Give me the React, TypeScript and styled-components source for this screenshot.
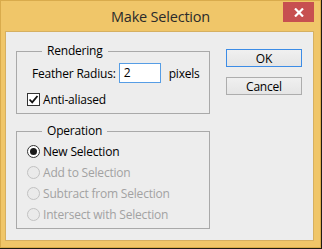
import React from 'react'
import styled, { createGlobalStyle } from 'styled-components'

const GlobalStyle = createGlobalStyle`
    html, body {
        margin: 0;
        padding: 0;
        background: #1e1b12;
    }
    body {
        width: 322px;
        height: 249px;
        overflow: hidden;
        font-family: "Open Sans", "Noto Sans", sans-serif;
        letter-spacing: -0.2px;
    }
`

const Window = styled.div`
    box-sizing: border-box;
    width: 321px;
    height: 248px;
    background: #f0c669;
    border: 1px solid #d9ab4c;
    display: flex;
    flex-direction: column;
`

const TitleBar = styled.div`
    position: relative;
    height: 30px;
    display: flex;
    align-items: center;
    justify-content: center;
    flex-shrink: 0;
`

const Title = styled.div`
    font-size: 14.5px;
    color: #2b2b2b;
    padding-top: 1px;
`

const CloseButton = styled.div`
    position: absolute;
    top: 1px;
    right: 6px;
    width: 31px;
    height: 20px;
    background: #c75050;
    display: flex;
    align-items: center;
    justify-content: center;
`

const Client = styled.div`
    box-sizing: border-box;
    margin: 0 6px 6px 4px;
    flex: 1;
    background: #ededed;
    border: 1px solid #d6b061;
    padding: 11px 0 0 10px;
    display: flex;
    gap: 16px;
`

const LeftColumn = styled.div`
    width: 194px;
    display: flex;
    flex-direction: column;
    gap: 9px;
`

const Group = styled.fieldset<{ $bottom: number }>`
    box-sizing: border-box;
    margin: 0;
    padding: 0 0 ${p => p.$bottom}px 10px;
    border: 1px solid #a9a9a9;
    min-width: 0;
`

const Legend = styled.legend`
    margin-left: 15px;
    padding: 0 5px;
    font-size: 12px;
    line-height: 16px;
    color: #000;
`

const FieldRow = styled.div`
    display: flex;
    align-items: center;
    height: 20px;
    margin-top: 4px;
    padding-left: 5px;
    font-size: 12px;
    color: #000;
`

const NumberInput = styled.div`
    box-sizing: border-box;
    width: 42px;
    height: 20px;
    margin-left: 3px;
    border: 1px solid #569de5;
    background: #fff;
    font-size: 12px;
    line-height: 18px;
    padding-left: 4px;
    color: #000;
`

const Unit = styled.span`
    margin-left: 8px;
`

const CheckRow = styled.div`
    display: flex;
    align-items: center;
    height: 16px;
    margin-top: 8px;
    font-size: 12px;
    color: #000;
    gap: 3px;
`

const CheckBox = styled.div`
    box-sizing: border-box;
    width: 13px;
    height: 13px;
    border: 1px solid #333;
    background: #fff;
    display: flex;
    align-items: center;
    justify-content: center;
`

const RadioList = styled.div`
    margin-top: 2px;
    display: flex;
    flex-direction: column;
`

const RadioRow = styled.div<{ $disabled?: boolean }>`
    display: flex;
    align-items: center;
    height: 21px;
    gap: 3px;
    font-size: 12px;
    color: ${p => (p.$disabled ? '#a2a2a2' : '#000')};
`

const RadioDot = styled.div<{ $checked?: boolean; $disabled?: boolean }>`
    box-sizing: border-box;
    width: 13px;
    height: 13px;
    border-radius: 50%;
    border: 1px solid ${p => (p.$disabled ? '#c2c2c2' : '#333')};
    background: ${p => (p.$disabled ? '#eaeaea' : '#fff')};
    display: flex;
    align-items: center;
    justify-content: center;

    &::after {
        content: '';
        display: ${p => (p.$checked ? 'block' : 'none')};
        width: 7px;
        height: 7px;
        border-radius: 50%;
        background: #1a1a1a;
    }
`

const ButtonColumn = styled.div`
    display: flex;
    flex-direction: column;
    gap: 10px;
    padding-top: 6px;
`

const Button = styled.div<{ $default?: boolean }>`
    box-sizing: border-box;
    width: 76px;
    height: 18px;
    border: 1px solid ${p => (p.$default ? '#3c8ce6' : '#adadad')};
    background: linear-gradient(#f0f0f0, #e5e5e5);
    display: flex;
    align-items: center;
    justify-content: center;
    font-size: 12px;
    color: #000;
`

const operations = [
    { label: 'New Selection', checked: true },
    { label: 'Add to Selection', disabled: true },
    { label: 'Subtract from Selection', disabled: true },
    { label: 'Intersect with Selection', disabled: true },
]

const App = () => {
    return (
        <>
            <GlobalStyle />
            <Window>
                <TitleBar>
                    <Title>Make Selection</Title>
                    <CloseButton>
                        <svg width="10" height="9" viewBox="0 0 10 9">
                            <path d="M1 0.5 L9 8.5 M9 0.5 L1 8.5" stroke="#fff" strokeWidth="2.2" />
                        </svg>
                    </CloseButton>
                </TitleBar>
                <Client>
                    <LeftColumn>
                        <Group $bottom={6}>
                            <Legend>Rendering</Legend>
                            <FieldRow>
                                Feather Radius:
                                <NumberInput>2</NumberInput>
                                <Unit>pixels</Unit>
                            </FieldRow>
                            <CheckRow>
                                <CheckBox>
                                    <svg width="11" height="11" viewBox="0 0 11 11">
                                        <path d="M1.5 5.5 L4.2 8.3 L9.5 2" stroke="#111" strokeWidth="1.8" fill="none" />
                                    </svg>
                                </CheckBox>
                                Anti-aliased
                            </CheckRow>
                        </Group>
                        <Group $bottom={3}>
                            <Legend>Operation</Legend>
                            <RadioList>
                                {operations.map(op => (
                                    <RadioRow key={op.label} $disabled={op.disabled}>
                                        <RadioDot $checked={op.checked} $disabled={op.disabled} />
                                        {op.label}
                                    </RadioRow>
                                ))}
                            </RadioList>
                        </Group>
                    </LeftColumn>
                    <ButtonColumn>
                        <Button $default>OK</Button>
                        <Button>Cancel</Button>
                    </ButtonColumn>
                </Client>
            </Window>
        </>
    )
}

export default App
